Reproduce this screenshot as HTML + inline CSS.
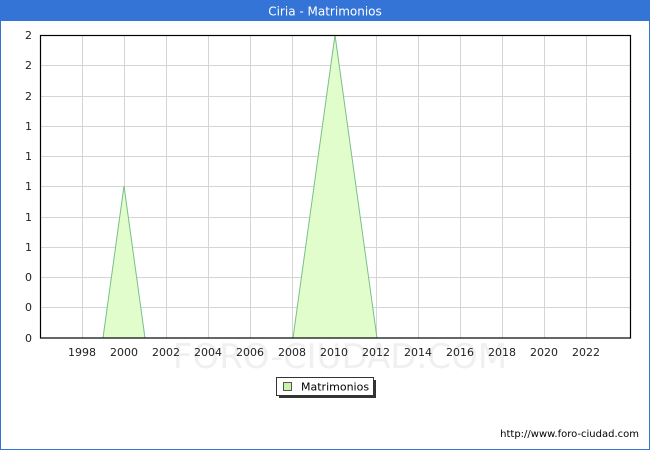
<!DOCTYPE html>
<html><head><meta charset="utf-8"><style>
body{margin:0;width:650px;height:450px;overflow:hidden;background:#fff;font-family:"DejaVu Sans","Liberation Sans",sans-serif;}
</style></head><body>
<svg width="650" height="450" xmlns="http://www.w3.org/2000/svg" style="position:absolute;left:0;top:0">
<rect x="0" y="0" width="650" height="450" fill="#fff"/>
<rect x="0" y="0" width="650" height="21" fill="#3474d6"/>
<rect x="0" y="0" width="1" height="450" fill="#3474d6"/>
<rect x="649" y="0" width="1" height="450" fill="#3474d6"/>
<rect x="0" y="449" width="650" height="1" fill="#3474d6"/>
<text x="325" y="15.5" font-size="12" fill="#fff" text-anchor="middle">Ciria - Matrimonios</text>
<g stroke="#d4d4d4" stroke-width="1">
<line x1="82.5" y1="35" x2="82.5" y2="338"/><line x1="124.5" y1="35" x2="124.5" y2="338"/><line x1="166.5" y1="35" x2="166.5" y2="338"/><line x1="208.5" y1="35" x2="208.5" y2="338"/><line x1="250.5" y1="35" x2="250.5" y2="338"/><line x1="292.5" y1="35" x2="292.5" y2="338"/><line x1="334.5" y1="35" x2="334.5" y2="338"/><line x1="376.5" y1="35" x2="376.5" y2="338"/><line x1="418.5" y1="35" x2="418.5" y2="338"/><line x1="460.5" y1="35" x2="460.5" y2="338"/><line x1="502.5" y1="35" x2="502.5" y2="338"/><line x1="544.5" y1="35" x2="544.5" y2="338"/><line x1="586.5" y1="35" x2="586.5" y2="338"/>
<line x1="40" y1="65.5" x2="630" y2="65.5"/><line x1="40" y1="96.5" x2="630" y2="96.5"/><line x1="40" y1="126.5" x2="630" y2="126.5"/><line x1="40" y1="156.5" x2="630" y2="156.5"/><line x1="40" y1="186.5" x2="630" y2="186.5"/><line x1="40" y1="217.5" x2="630" y2="217.5"/><line x1="40" y1="247.5" x2="630" y2="247.5"/><line x1="40" y1="277.5" x2="630" y2="277.5"/><line x1="40" y1="307.5" x2="630" y2="307.5"/>
</g>
<text x="340" y="368" font-size="34" fill="#f0f0f0" text-anchor="middle">FORO-CIUDAD.COM</text>
<polygon points="103,338 124,186 145,338" fill="#e2fdcc" stroke="#78c08a" stroke-width="1"/>
<polygon points="293,338 335,35 377,338" fill="#e2fdcc" stroke="#78c08a" stroke-width="1"/>
<rect x="40.5" y="35.5" width="590" height="302.5" fill="none" stroke="#000" stroke-width="1.2"/>
<g font-size="11" fill="#222" text-anchor="end">
<text x="32" y="39">2</text><text x="32" y="69">2</text><text x="32" y="100">2</text><text x="32" y="130">1</text><text x="32" y="160">1</text><text x="32" y="190">1</text><text x="32" y="221">1</text><text x="32" y="251">1</text><text x="32" y="281">0</text><text x="32" y="311">0</text><text x="32" y="342">0</text>
</g>
<g font-size="11" fill="#222" text-anchor="middle">
<text x="82" y="356">1998</text><text x="124" y="356">2000</text><text x="166" y="356">2002</text><text x="208" y="356">2004</text><text x="250" y="356">2006</text><text x="292" y="356">2008</text><text x="334" y="356">2010</text><text x="376" y="356">2012</text><text x="418" y="356">2014</text><text x="460" y="356">2016</text><text x="502" y="356">2018</text><text x="544" y="356">2020</text><text x="586" y="356">2022</text>
</g>
<rect x="279" y="380" width="97" height="18" fill="#333"/>
<rect x="276.5" y="377.5" width="97" height="18" fill="#fff" stroke="#333"/>
<rect x="283.5" y="382.5" width="8" height="8" fill="#c8f5a8" stroke="#555"/>
<text x="301" y="390.5" font-size="11" fill="#000">Matrimonios</text>
<text x="639" y="437" font-size="10" fill="#000" text-anchor="end">http://www.foro-ciudad.com</text>
</svg>
</body></html>
